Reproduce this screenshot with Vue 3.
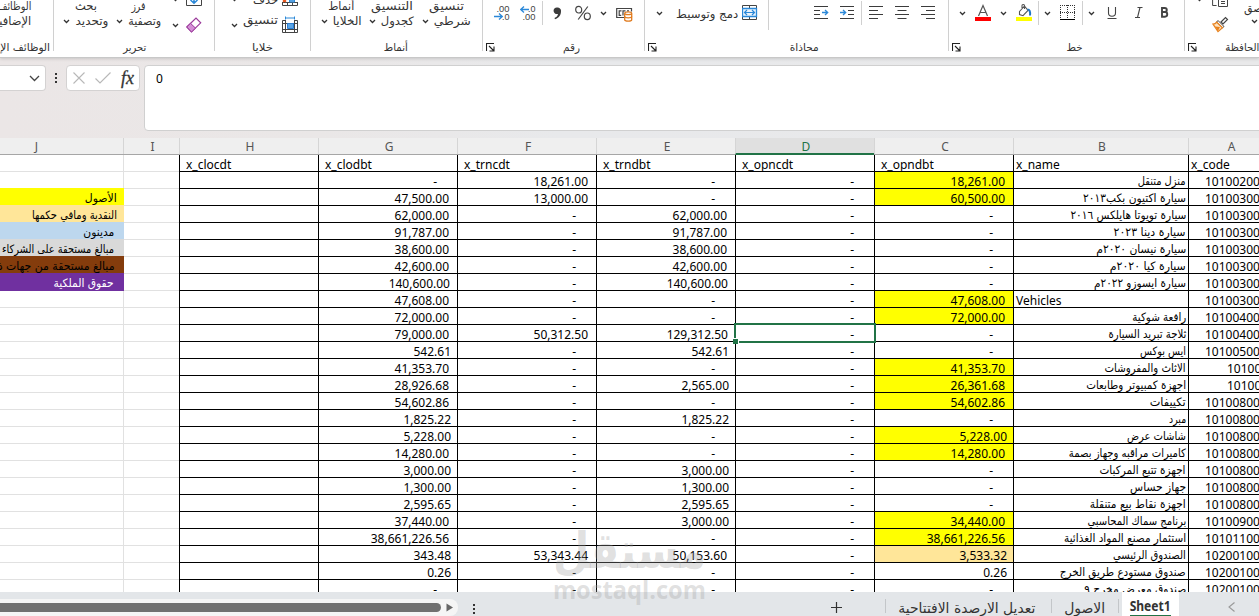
<template>
  <div class="excel">
    <svg class="symbols" width="0" height="0">
      <symbol id="chev" viewBox="0 0 7 40"><path d="M1 12l2.5 2.5L6 12" fill="none" stroke="#333" stroke-width="1.3" /></symbol>
      <symbol id="sep" viewBox="0 0 1 40"><path d="M.5 1v24" stroke="#d0d0d0" /></symbol>
      <symbol id="sep-long" viewBox="0 0 1 40"><path d="M.5 0v30" stroke="#d0d0d0" /></symbol>
      <symbol id="chev-pair" viewBox="0 0 7 40"><path d="M1-2l2.5 2.5L6-2M1 24l2.5 2.5L6 24" fill="none" stroke="#333" stroke-width="1.3" /></symbol>
      <symbol id="fill-erase" viewBox="0 0 17 40">
        <path d="M.5 0v5.500h15V0" fill="none" stroke="#444" />
        <path d="M8 0v3M4.500 0L8 3.200 11.500 0" fill="none" stroke="#2b88d8" stroke-width="1.500" />
        <path d="M.8 27L10 18l4.700 4.800L5.500 32z" fill="#fff" stroke="#9b3a9b" stroke-width="1.200" />
        <path d="M.8 27l3.700-3.700 5 4.800-4 3.900z" fill="#d48fd6" stroke="#9b3a9b" />
      </symbol>
      <symbol id="cells" viewBox="0 0 17 40">
        <path d="M.5 2v3.500h15V2M.5 2.500h15M5.500 2v3M10.500 2v3" fill="none" stroke="#444" />
        <path d="M1 0l3 2M4 0L1 2" stroke="#e8571e" stroke-width="1.500" />
        <path d="M7.500 0h5v2h-5z" fill="#7fb9ea" stroke="#2b88d8" />
        <path d="M3 20.500H.5v12h15v-12H13M.5 23.500h15M.5 29.500h15M3.500 20v12M12.500 20v12" fill="none" stroke="#444" />
        <path d="M5.500 23.500h6v5h-6z" fill="#5aa5e6" stroke="#2b7cd3" />
        <path d="M3.500 16.500v3M12.500 16.500v3M3.500 18h9" fill="none" stroke="#2b88d8" />
      </symbol>
      <symbol id="dec-less" viewBox="0 0 17 40">
        <text x="2.500" y="11.800" font-family="Liberation Sans" font-size="9.800" textLength="13" lengthAdjust="spacingAndGlyphs" fill="#444">.00</text>
        <text x="8" y="20" font-family="Liberation Sans" font-size="9.800" textLength="7.500" lengthAdjust="spacingAndGlyphs" fill="#444">.0</text>
        <path d="M0 16.500h8M5 13.500l3.300 3L5 19.500" fill="none" stroke="#2b88d8" stroke-width="1.300" />
      </symbol>
      <symbol id="dec-more" viewBox="0 0 17 40">
        <text x="8" y="11.800" font-family="Liberation Sans" font-size="9.800" textLength="7.500" lengthAdjust="spacingAndGlyphs" fill="#444">.0</text>
        <text x="2.500" y="20" font-family="Liberation Sans" font-size="9.800" textLength="13" lengthAdjust="spacingAndGlyphs" fill="#444">.00</text>
        <path d="M9 9.500H.8M4 6.500l-3.300 3 3.300 3" fill="none" stroke="#2b88d8" stroke-width="1.300" />
      </symbol>
      <symbol id="comma" viewBox="0 0 9 40">
        <path d="M4 7.500a3.500 3.300 0 0 1 4 3.700c0 3.800-2.300 7-6 8l-.5-1.300c2-.8 3.200-2 3.500-4A3.300 3.300 0 1 1 4 7.500z" fill="#3b3b3b" />
      </symbol>
      <symbol id="percent" viewBox="0 0 16 40">
        <path d="M12.800 6.500L3.200 19.500" stroke="#444" stroke-width="1.200" />
        <ellipse cx="3.700" cy="9.700" rx="3" ry="3.300" fill="none" stroke="#444" stroke-width="1.200" />
        <ellipse cx="12.300" cy="16.300" rx="3" ry="3.300" fill="none" stroke="#444" stroke-width="1.200" />
      </symbol>
      <symbol id="money" viewBox="0 0 17 40">
        <path d="M8.500 17.500H.7v-9h14.800v3" fill="none" stroke="#444" stroke-width="1.200" />
        <path d="M5.500 10.800H3.200v4.500h2M7 15.500v-4.700h2.500M11 10.800h2" fill="none" stroke="#444" stroke-width="1.200" />
        <path d="M8.700 13.500v6.200c0 1.800 7 1.800 7 0v-6.200" fill="#fff" stroke="#e07b1f" stroke-width="1.300" />
        <ellipse cx="12.200" cy="13.300" rx="3.500" ry="1.400" fill="#fff" stroke="#e07b1f" stroke-width="1.200" />
        <path d="M8.700 16.500c0 1.700 7 1.700 7 0" fill="none" stroke="#e07b1f" stroke-width="1.200" />
      </symbol>
      <symbol id="merge" viewBox="0 0 16 40">
        <path d="M.5 8.500v-3h14v3M.5 16.500v3h14v-3M7.500 5.500v3M7.500 16.500v3" fill="none" stroke="#444" />
        <path d="M.5 8.500h14v8H.5z" fill="#eaf4fd" stroke="#2b88d8" stroke-width="1.300" />
        <path d="M2.500 12.500h10M5 10l-2.500 2.500L5 15M10 10l2.500 2.500L10 15" fill="none" stroke="#2b88d8" stroke-width="1.200" />
      </symbol>
      <symbol id="indent-a" viewBox="0 0 15 40">
        <path d="M0 6.500h14M0 10.500h6M0 14.500h6M0 18.500h14" stroke="#3b3b3b" />
        <path d="M8 12.500h5.500M11 10l2.700 2.500L11 15" fill="none" stroke="#2b88d8" stroke-width="1.300" />
      </symbol>
      <symbol id="indent-b" viewBox="0 0 15 40">
        <path d="M0 6.500h14M8 10.500h6M8 14.500h6M0 18.500h14" stroke="#3b3b3b" />
        <path d="M0 12.500h5.500M3 10l2.700 2.500L3 15" fill="none" stroke="#2b88d8" stroke-width="1.300" />
      </symbol>
      <symbol id="al-left" viewBox="0 0 14 40"><path d="M0 6.500h14M0 10.500h9M0 14.500h14M0 18.500h9" stroke="#3b3b3b" /></symbol>
      <symbol id="al-center" viewBox="0 0 14 40"><path d="M0 6.500h14M2.500 10.500h9M0 14.500h14M2.500 18.500h9" stroke="#3b3b3b" /></symbol>
      <symbol id="al-right" viewBox="0 0 14 40"><path d="M0 6.500h14M5 10.500h9M0 14.500h14M5 18.500h9" stroke="#3b3b3b" /></symbol>
      <symbol id="font-color" viewBox="0 0 16 40">
        <path d="M3.500 16L8 5.500 12.500 16M5 12.500h6" fill="none" stroke="#555" stroke-width="1.200" />
        <path d="M0 17h16v4H0z" fill="#f00" />
      </symbol>
      <symbol id="bucket" viewBox="0 0 16 40">
        <path d="M3.500 11.500l5-5.500 3.500 4.500-5 5.200-3.500-1.200zM6 8V5.500c0-1 2-1.500 2.500 0V9" fill="#fff" stroke="#555" stroke-width="1.100" />
        <path d="M11.500 9.500c2 0 3 2 2.500 6" fill="none" stroke="#1f77c4" stroke-width="2" />
        <path d="M0 17h16v4H0z" fill="#ff0" />
      </symbol>
      <symbol id="borders" viewBox="0 0 15 40">
        <path d="M.5 5v13M7.500 5v13M14.500 5v13M0 5.500h15M0 12.500h15" fill="none" stroke="#333" stroke-dasharray="1 1" />
        <path d="M0 19.500h15" stroke="#000" />
      </symbol>
      <symbol id="underline" viewBox="0 0 10 40">
        <path d="M1.500 7v6c0 4.300 7 4.300 7 0V7M.5 18.500h9" fill="none" stroke="#444" stroke-width="1.100" />
      </symbol>
      <symbol id="italic" viewBox="0 0 8 40">
        <path d="M2.500 7.500h5M0 17.500h5M5 7.500l-2.500 10" fill="none" stroke="#444" stroke-width="1.100" />
      </symbol>
      <symbol id="bold" viewBox="0 0 9 40">
        <path d="M2 8h2.700c2.800 0 2.800 4 0 4H2zM2 12h3c3 0 3 4.700 0 4.700H2z" fill="none" stroke="#444" stroke-width="1.900" />
      </symbol>
      <symbol id="copy-brush" viewBox="0 0 17 40">
        <path d="M.6 0v5.500h4M6.500-1v7.500h9V0M9 1.500h4M9 3.500h4" fill="none" stroke="#444" />
        <path d="M9 22l4.500-4.500 2 2L11 24z" fill="#fff" stroke="#444" stroke-width="1.200" />
        <path d="M6 20.500l6 6-1.500 1.200-6-5.500z" fill="#fff" stroke="#444" />
        <path d="M1 24.200c2 0 3-1 3.700-2l5.800 5.500-4.500 4z" fill="#fde3c2" stroke="#e8821e" stroke-width="1.200" />
        <path d="M3 26.500l5 .5-2 4z" fill="#e8821e" />
      </symbol>
      <symbol id="chev-top" viewBox="0 0 7 40"><path d="M1-2l2.500 2.500L6-2" fill="none" stroke="#333" stroke-width="1.300" /></symbol>
    </svg>

    <div class="ribbon">
      <div v-for="(g, i) in groups" :key="i" class="group" :style="{ width: g.w + 'px' }">
        <div class="tools">
          <template v-for="(t, k) in g.tools" :key="k">
            <svg v-if="t.icon" class="tool" :width="t.w" height="40" :style="{ marginLeft: t.gap + 'px' }"><use :href="'#' + t.icon" /></svg>
            <div v-else class="stack" :class="t.kind" :style="{ marginLeft: t.gap + 'px', width: t.w + 'px' }">
              <div v-for="(l, n) in t.lines" :key="n" class="line">
                <span v-if="l.text" v-fit="l.w" class="ar" :style="{ marginRight: l.inset + 'px' }">{{ l.text }}</span>
                <svg v-if="l.chev !== undefined" class="mini" width="7" height="5" :style="{ marginRight: l.chev + 'px' }"><path d="M1 1l2.500 2.500L6 1" fill="none" stroke="#333" stroke-width="1.300" /></svg>
              </div>
            </div>
          </template>
        </div>
        <div class="caption">
          <svg v-if="g.launch" class="launch" width="9" height="9"><path d="M.5 8V.5H8M3 3l4.500 4.500M8 3.500V8H3.500" fill="none" stroke="#222" stroke-width="1.100" /></svg>
          <span class="caption-box" :style="{ width: g.labelEnd - (g.launch ? 12 : 0) + 'px' }"><span v-fit="g.labelW" class="ar">{{ g.label }}</span></span>
        </div>
      </div>
    </div>

    <div class="formula">
      <div class="name-box"><svg width="11" height="7"><path d="M1 1l4.500 4.500L10 1" fill="none" stroke="#444" stroke-width="1.300" /></svg></div>
      <svg class="dots" width="3" height="11"><path d="M0 0h2v2H0zM0 4h2v2H0zM0 8h2v2H0z" fill="#333" /></svg>
      <div class="fx-box">
        <svg width="12" height="12"><path d="M.5.5l11 11M11.500.5l-11 11" stroke="#b8b8b8" stroke-width="1.100" /></svg>
        <svg width="16" height="12"><path d="M.5 6.500l4.500 4.500L15.500.5" fill="none" stroke="#b8b8b8" stroke-width="1.200" /></svg>
        <span class="fx">fx</span>
      </div>
      <div class="input">0</div>
    </div>

    <div class="letters">
      <div v-for="c in columns" :key="c" class="letter" :class="['col-' + c, { active: c === 'D' }]">{{ c }}</div>
    </div>

    <div class="sheet">
      <div v-for="(r, i) in rows" :key="i" class="row">
        <div class="cell plain col-J" :class="r.legend && r.legend.color">
          <span v-if="r.legend" v-fit="r.legend.w" class="ar" :class="{ near: r.legend.near }">{{ r.legend.text }}</span>
        </div>
        <div class="cell plain col-I"></div>
        <div v-for="c in ['H', 'G', 'F', 'E', 'D', 'C']" :key="c" class="cell" :class="['col-' + c, cellClass(r, c)]">
          <span>{{ r[c] }}</span>
          <div v-if="c === 'D' && i === 10" class="selection"><i></i></div>
        </div>
        <div class="cell name col-B" :class="{ latin: !r.nameW }">
          <span v-if="r.nameW" v-fit="r.nameW" class="ar">{{ r.name }}</span>
          <span v-else>{{ r.name }}</span>
        </div>
        <div class="cell code col-A" :class="{ head: i === 0, short: r.code.length < 6 }">{{ r.code }}</div>
      </div>
    </div>

    <div class="bottom">
      <div class="scroll"><div class="thumb"></div><svg width="8" height="9"><path d="M.5.5l6.500 4-6.500 4z" fill="#666" /></svg></div>
      <svg class="tab-dots" width="3" height="11"><path d="M0 0h2v2H0zM0 4h2v2H0zM0 8h2v2H0z" fill="#333" /></svg>
      <svg class="plus" width="11" height="11"><path d="M5.500 0v11M0 5.500h11" stroke="#333" stroke-width="1.200" /></svg>
      <div class="tab wide"><span v-fit="137" class="ar">تعديل الارصدة الافتتاحية</span></div>
      <div class="tab mid"><span v-fit="41" class="ar">الاصول</span></div>
      <div class="tab-end"></div>
      <div class="tab current"><span v-fit="41">Sheet1</span></div>
      <svg class="back" width="8" height="10"><path d="M6.500.5L1 5l5.500 4.500" fill="none" stroke="#999" stroke-width="1.100" /></svg>
    </div>

    <div class="watermark">
      <div class="wm-ar"><span v-fit="153">مستقل</span></div>
      <div class="wm-en"><span v-fit="153">mostaql.com</span></div>
    </div>
  </div>
</template>

<script setup>
const columns = ['J', 'I', 'H', 'G', 'F', 'E', 'D', 'C', 'B', 'A'];

// squeeze or stretch a run of text to the given width
const vFit = {
  mounted(el, binding) {
    const natural = el.getBoundingClientRect().width;
    el.style.transform = `scaleX(${binding.value / natural})`;
    el.style.marginLeft = `${binding.value - natural}px`;
  }
};

const groups = [
  {
    w: 54, label: 'الوظائف الإضافية', labelW: 76, labelEnd: 50,
    tools: [
      { gap: -8, w: 39, lines: [{ text: 'الوظائف', w: 34, inset: 0 }, { text: 'الإضافية', w: 38, inset: 0 }] }
    ]
  },
  {
    w: 161, label: 'تحرير', labelW: 23, labelEnd: 92,
    tools: [
      { gap: 9, w: 45, lines: [{ text: 'بحث', w: 22, inset: 11 }, { text: 'وتحديد', w: 33, inset: 0, chev: 5 }] },
      { gap: 8, w: 45, lines: [{ text: 'فرز', w: 14, inset: 16 }, { text: 'وتصفية', w: 33, inset: 0, chev: 5 }] },
      { gap: 11, w: 7, icon: 'chev-pair' },
      { gap: 7, w: 17, icon: 'fill-erase' }
    ]
  },
  {
    w: 96, label: 'خلايا', labelW: 21, labelEnd: 58,
    tools: [
      { gap: 16, w: 7, icon: 'chev-pair' },
      { gap: 5, w: 35, kind: 'low', lines: [{ text: 'حذف', w: 25, inset: 0 }, { text: 'تنسيق', w: 35, inset: 0 }] },
      { gap: 4, w: 17, icon: 'cells' }
    ]
  },
  {
    w: 172, label: 'أنماط', labelW: 24, labelEnd: 97,
    tools: [
      { gap: 9, w: 42, lines: [{ text: 'أنماط', w: 26, inset: 8 }, { text: 'الخلايا', w: 29, inset: 0, chev: 5 }] },
      { gap: 7, w: 45, lines: [{ text: 'التنسيق', w: 42, inset: 1 }, { text: 'كجدول', w: 33, inset: 0, chev: 5 }] },
      { gap: 8, w: 49, lines: [{ text: 'تنسيق', w: 35, inset: 7 }, { text: 'شرطي', w: 37, inset: 0, chev: 5 }] }
    ]
  },
  {
    w: 162, label: 'رقم', labelW: 17, labelEnd: 97, launch: true,
    tools: [
      { gap: 11, w: 17, icon: 'dec-less' },
      { gap: 9, w: 17, icon: 'dec-more' },
      { gap: 5, w: 1, icon: 'sep' },
      { gap: 10, w: 9, icon: 'comma' },
      { gap: 13, w: 16, icon: 'percent' },
      { gap: 9, w: 7, icon: 'chev' },
      { gap: 9, w: 17, icon: 'money' }
    ]
  },
  {
    w: 304, label: 'محاذاة', labelW: 29, labelEnd: 174, launch: true,
    tools: [
      { gap: 11, w: 7, icon: 'chev' },
      { gap: 13, w: 62, kind: 'single', lines: [{ text: 'دمج وتوسيط', w: 62, inset: 0 }] },
      { gap: 4, w: 16, icon: 'merge' },
      { gap: 10, w: 1, icon: 'sep-long' },
      { gap: 45, w: 15, icon: 'indent-a' },
      { gap: 11, w: 15, icon: 'indent-b' },
      { gap: 6, w: 1, icon: 'sep' },
      { gap: 7, w: 14, icon: 'al-left' },
      { gap: 12, w: 14, icon: 'al-center' },
      { gap: 12, w: 14, icon: 'al-right' }
    ]
  },
  {
    w: 236, label: 'خط', labelW: 16, labelEnd: 133, launch: true,
    tools: [
      { gap: 10, w: 7, icon: 'chev' },
      { gap: 9, w: 16, icon: 'font-color' },
      { gap: 9, w: 7, icon: 'chev' },
      { gap: 9, w: 16, icon: 'bucket' },
      { gap: 6, w: 1, icon: 'sep' },
      { gap: 5, w: 7, icon: 'chev' },
      { gap: 9, w: 15, icon: 'borders' },
      { gap: 7, w: 1, icon: 'sep' },
      { gap: 5, w: 7, icon: 'chev' },
      { gap: 12, w: 10, icon: 'underline' },
      { gap: 18, w: 8, icon: 'italic' },
      { gap: 17, w: 9, icon: 'bold' }
    ]
  },
  {
    w: 96, label: 'الحافظة', labelW: 34, labelEnd: 74, launch: true,
    tools: [
      { gap: 11, w: 7, icon: 'chev-top' },
      { gap: 9, w: 17, icon: 'copy-brush' },
      { gap: 13, w: 24, kind: 'paste', lines: [{ text: 'لصق', w: 22, inset: 0 }, { inset: 0, chev: 8 }] }
    ]
  }
];

const legends = {
  2: { text: 'الأصول', w: 32, color: 'yellow', near: true },
  3: { text: 'النقدية ومافي حكمها', w: 85, color: 'tan', near: true },
  4: { text: 'مدينون', w: 31, color: 'blue' },
  5: { text: 'مبالغ مستحقة على الشركاء', w: 112, color: 'gray' },
  6: { text: 'مبالغ مستحقة من جهات ذات', w: 130, color: 'brown' },
  7: { text: 'حقوق الملكية', w: 60, color: 'purple' }
};

// code, name, name width, C, E, F, G
const data = [
  ['10100200', 'منزل متنقل', 48, '18,261.00', '-', '18,261.00', '-'],
  ['10100300', 'سيارة اكتيون بكب٢٠١٣', 103, '60,500.00', '-', '13,000.00', '47,500.00'],
  ['10100300', 'سيارة تويوتا هايلكس ٢٠١٦', 116, '-', '62,000.00', '-', '62,000.00'],
  ['10100300', 'سيارة دينا ٢٠٢٣', 72, '-', '91,787.00', '-', '91,787.00'],
  ['10100300', 'سيارة نيسان ٢٠٢٠م', 90, '-', '38,600.00', '-', '38,600.00'],
  ['10100300', 'سيارة كيا ٢٠٢٠م', 76, '-', '42,600.00', '-', '42,600.00'],
  ['10100300', 'سيارة ايسوزو ٢٠٢٢م', 92, '-', '140,600.00', '-', '140,600.00'],
  ['10100300', 'Vehicles', 0, '47,608.00', '-', '-', '47,608.00'],
  ['10100400', 'رافعة شوكية', 54, '72,000.00', '-', '-', '72,000.00'],
  ['10100400', 'ثلاجة تبريد السيارة', 78, '-', '129,312.50', '50,312.50', '79,000.00'],
  ['10100500', 'ايس بوكس', 46, '-', '542.61', '-', '542.61'],
  ['10100', 'الاثاث والمفروشات', 81, '41,353.70', '-', '-', '41,353.70'],
  ['10100', 'اجهزة كمبيوتر وطابعات', 100, '26,361.68', '2,565.00', '-', '28,926.68'],
  ['10100800', 'تكييفات', 36, '54,602.86', '-', '-', '54,602.86'],
  ['10100800', 'مبرد', 17, '-', '1,825.22', '-', '1,825.22'],
  ['10100800', 'شاشات عرض', 59, '5,228.00', '-', '-', '5,228.00'],
  ['10100800', 'كاميرات مراقبه وجهاز بصمة', 117, '14,280.00', '-', '-', '14,280.00'],
  ['10100800', 'اجهزة تتبع المركبات', 86, '-', '3,000.00', '-', '3,000.00'],
  ['10100800', 'جهاز حساس', 56, '-', '1,300.00', '-', '1,300.00'],
  ['10100800', 'اجهزة نقاط بيع متنقلة', 96, '-', '2,595.65', '-', '2,595.65'],
  ['10100900', 'برنامج سماك المحاسبي', 99, '34,440.00', '3,000.00', '-', '37,440.00'],
  ['10101100', 'استثمار مصنع المواد الغذائية', 122, '38,661,226.56', '-', '-', '38,661,226.56'],
  ['10200100', 'الصندوق الرئيسي', 73, '3,533.32', '50,153.60', '53,343.44', '343.48'],
  ['10200100', 'صندوق مستودع طريق الخرج', 126, '0.26', '-', '-', '0.26'],
  ['10200100', 'صندوق معرض مخرج ٩', 102, '-', '-', '-', '-']
];

const rows = [
  { head: true, code: 'x_code', name: 'x_name', C: 'x_opndbt', D: 'x_opncdt', E: 'x_trndbt', F: 'x_trncdt', G: 'x_clodbt', H: 'x_clocdt' },
  ...data.map(([code, name, nameW, C, E, F, G], i) => ({ code, name, nameW, C, D: '-', E, F, G, H: '', legend: legends[i + 1] }))
];

const cellClass = (r, c) => {
  if (r.head) return 'head';
  const v = r[c];
  const list = [v === '-' ? 'dash' : 'num'];
  if (v.length <= 8) list.push('small');
  if (v.length === 10) list.push('large');
  if (c === 'C' && v === '3,533.32') list.push('tan');
  else if (c === 'C' && v.length > 4) list.push('yellow');
  return list;
};
</script>

<style>
body {
  margin: 0;
  overflow: hidden;
}
</style>

<style scoped>
.excel {
  position: relative;
  width: 1259px;
  height: 616px;
  overflow: hidden;
  background: linear-gradient(90deg, #ebe6e6 0, #eae7e7 320px, #e8e9eb 560px, #e9e9ea 100%);
  font-family: "Noto Sans", "DejaVu Sans", sans-serif;
  font-size: 12px;
  color: #000;
}
.symbols {
  display: block;
  height: 0;
}
.ar {
  display: inline-block;
  flex: none;
  white-space: nowrap;
  direction: rtl;
  font-family: "DejaVu Sans", sans-serif;
  font-size: 11.5px;
  transform-origin: right center;
}
.ribbon {
  display: flex;
  height: 57px;
  background: #fff;
  border-bottom: 1px solid #c8c8c8;
  box-shadow: 0 1px 3px rgba(0, 0, 0, 0.15);
}
.group {
  flex: none;
  box-sizing: border-box;
  height: 51px;
  border-right: 1px solid #d0d0d0;
}
.tools {
  display: flex;
  height: 40px;
}
.tool {
  flex: none;
  display: block;
}
.stack {
  flex: none;
  direction: rtl;
  margin-top: -1px;
  color: #333;
}
.line {
  display: flex;
  align-items: center;
  height: 15px;
  line-height: 15px;
}
.low {
  margin-top: -7px;
}
.low .line {
  height: 26px;
}
.low .line:first-child {
  height: 14px;
}
.single {
  margin-top: 7px;
}
.paste {
  margin-top: 1px;
}
.paste .line:last-child {
  height: 10px;
}
.mini {
  flex: none;
}
.caption {
  display: flex;
  align-items: center;
  height: 14px;
  color: #333;
}
.launch {
  flex: none;
  margin: 0 0 0 3px;
}
.caption-box {
  flex: none;
  display: flex;
  justify-content: flex-end;
}
.caption .ar {
  font-size: 10.5px;
}
.formula {
  display: flex;
  align-items: flex-start;
  height: 73px;
  padding-top: 7px;
}
.formula > * {
  flex: none;
}
.name-box {
  display: flex;
  align-items: center;
  justify-content: flex-end;
  box-sizing: border-box;
  width: 46px;
  height: 26px;
  padding-right: 5px;
  background: #fff;
  border: 1px solid #d4d2d2;
  border-left: 0;
  border-radius: 0 4px 4px 0;
}
.dots {
  margin: 8px 8px 0 9px;
}
.fx-box {
  display: flex;
  align-items: center;
  box-sizing: border-box;
  width: 74px;
  height: 26px;
  gap: 10px;
  padding-left: 6px;
  background: #fff;
  border: 1px solid #d4d2d2;
  border-radius: 4px;
}
.fx {
  font: italic 18px/20px "Liberation Serif", serif;
  -webkit-text-stroke: 0.3px #333;
  color: #333;
}
.input {
  box-sizing: border-box;
  width: 1130px;
  height: 66px;
  margin-left: 4px;
  padding: 4px 11px;
  background: #fff;
  border: 1px solid #d0d0d0;
  border-radius: 4px;
  line-height: 18px;
}
.letters {
  display: flex;
  height: 16px;
  background: #efefef;
  border-bottom: 1px solid #a6a6a6;
}
.letter {
  flex: none;
  box-sizing: border-box;
  padding-left: 2px;
  border-left: 1px solid #d5d5d5;
  text-align: center;
  line-height: 18px;
  color: #555;
}
.letter.col-J {
  padding-right: 52px;
  border-left: 0;
  border-right: 1px solid #d5d5d5;
}
.letter.col-I {
  border-left: 0;
}
.letter.col-A {
  padding-left: 0;
}
.active {
  height: 17px;
  background: #e0e0e0;
  border-bottom: 2px solid #217346;
  color: #217346;
}
.col-J { width: 124px; }
.col-I { width: 55px; }
.col-H, .col-G, .col-F, .col-E, .col-D, .col-C { width: 139px; }
.col-B { width: 175px; }
.col-A { width: 86px; }
.sheet {
  height: 437px;
  overflow: hidden;
  background: #fff;
}
.row {
  display: flex;
  height: 17px;
}
.cell {
  position: relative;
  flex: none;
  display: flex;
  justify-content: flex-end;
  box-sizing: border-box;
  height: 17px;
  border-left: 1px solid #000;
  border-bottom: 1px solid #000;
  line-height: 19px;
  white-space: nowrap;
}
.cell .ar {
  line-height: 18px;
}
.plain {
  border-left: 0;
  border-bottom-color: #e1e1e1;
}
.plain.col-J {
  border-right: 1px solid #e1e1e1;
  padding-right: 9px;
}
.plain .near {
  margin-right: -3px;
}
.head {
  justify-content: flex-start;
  padding-left: 6px;
}
.num {
  padding-right: 8px;
}
.num.small {
  padding-right: 6px;
}
.num.large {
  padding-right: 7px;
}
.dash {
  padding-right: 20px;
}
.name {
  padding-right: 2px;
}
.latin {
  justify-content: flex-start;
  padding-left: 2px;
}
.code {
  justify-content: flex-start;
  padding-left: 16px;
}
.code.short {
  padding-left: 38px;
}
.code.head {
  padding-left: 2px;
}
.yellow { background: #ff0; }
.tan { background: #ffe699; }
.blue { background: #bdd7ee; }
.gray { background: #d9d9d9; }
.brown { background: #843c0c; }
.purple { background: #7030a0; color: #fff; }
.plain.yellow, .plain.tan, .plain.blue, .plain.gray, .plain.brown, .plain.purple {
  height: 18px;
  margin-top: -1px;
  padding-top: 1px;
  border-color: transparent;
}
.selection {
  position: absolute;
  left: -2px;
  top: -2px;
  z-index: 2;
  box-sizing: border-box;
  width: 142px;
  height: 20px;
  border: 2px solid #217346;
}
.selection i {
  position: absolute;
  left: -3px;
  bottom: -3px;
  width: 5px;
  height: 5px;
  background: #217346;
  border: solid #fff;
  border-width: 1px 1px 0 0;
}
.bottom {
  display: flex;
  align-items: flex-start;
  height: 24px;
  background: #e3e6e9;
}
.scroll {
  display: flex;
  align-items: center;
  flex: none;
  width: 458px;
  height: 17px;
  margin-top: 7px;
  background: #f5f5f5;
  border-radius: 0 8px 8px 0;
}
.thumb {
  width: 441px;
  height: 9px;
  margin-right: 5px;
  border-radius: 0 5px 5px 0;
  background: #707070;
}
.tab-dots {
  margin: 12px 0 0 15px;
}
.plus {
  margin: 10px 43px 0 355px;
}
.tab {
  display: flex;
  flex: none;
  box-sizing: border-box;
  height: 24px;
  color: #333;
}
.tab .ar {
  font-size: 14px;
  line-height: 32px;
}
.wide {
  width: 166px;
  padding-left: 13px;
}
.mid {
  width: 67px;
  padding-left: 13px;
}
.wide, .mid {
  background: linear-gradient(#c3c6c9, #c3c6c9) left 7px / 1px 14px no-repeat;
}
.tab-end {
  width: 1px;
  height: 14px;
  margin: 7px 3px 0 0;
  background: #c3c6c9;
}
.current {
  width: 57px;
  padding-left: 8px;
  background: linear-gradient(#217346, #217346) 8px bottom / 41px 1px no-repeat, #fff;
  font-weight: bold;
  font-size: 14px;
  line-height: 28px;
}
.current span {
  display: inline-block;
  height: 22px;
  transform-origin: right center;
}
.back {
  margin: 10px 0 0 49px;
}
.watermark {
  position: absolute;
  left: 553px;
  top: 521px;
  width: 153px;
  color: rgba(160, 160, 160, 0.32);
  font-weight: bold;
}
.watermark span {
  display: inline-block;
  transform-origin: right center;
}
.wm-ar {
  display: flex;
  height: 56px;
  direction: rtl;
  font: bold 50px/60px "DejaVu Sans", sans-serif;
}
.wm-en {
  display: flex;
  font: bold 25px/24px "Open Sans", sans-serif;
}
</style>
